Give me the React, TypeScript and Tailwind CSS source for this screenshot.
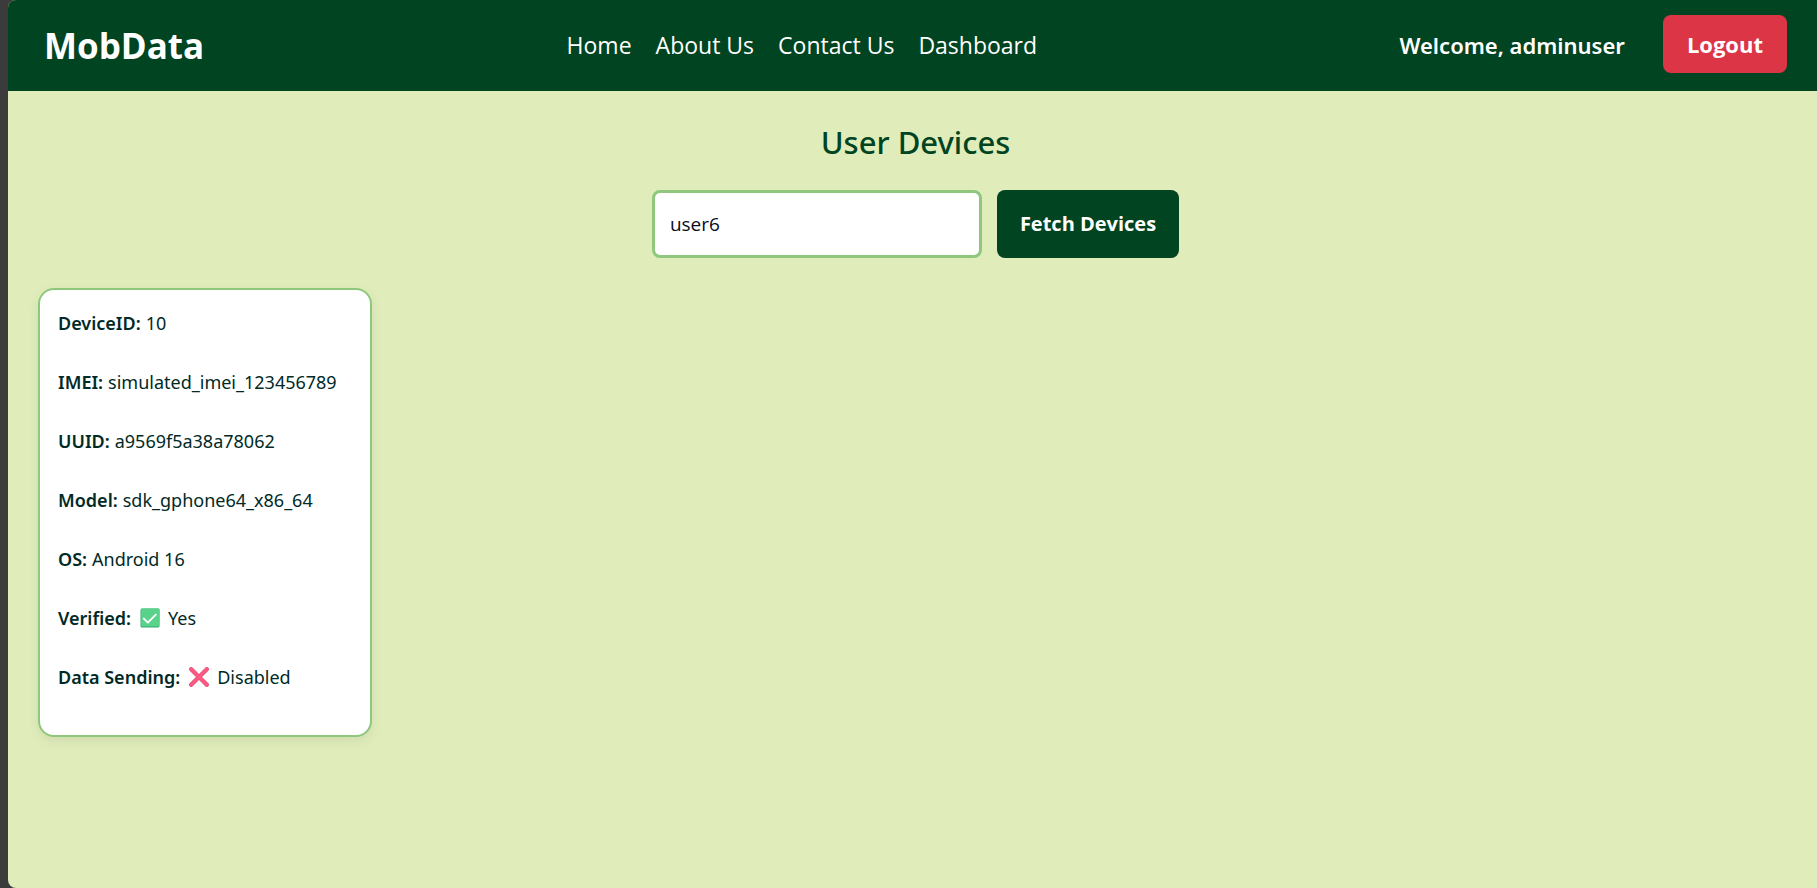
import { useState } from "react";
import type { ReactNode } from "react";

const links = ["Home", "About Us", "Contact Us", "Dashboard"];

function CheckIcon() {
  return (
    <svg viewBox="0 0 20 20" className="mx-1 size-5" aria-label="verified" role="img">
      <rect x="0.5" y="0.5" width="19" height="19" rx="1.5" fill="#35a873" />
      <rect x="1.2" y="0.5" width="18.3" height="18" rx="1.2" fill="#59d28c" />
      <path d="M3.8 10.6 7.8 14.6l8-8" fill="none" stroke="#fff" strokeWidth="1.9" strokeLinecap="round" strokeLinejoin="round" />
    </svg>
  );
}

function CrossIcon() {
  return (
    <svg viewBox="0 0 20 20" className="mx-1 size-5" aria-label="disabled" role="img">
      <path d="M2.2 2.2l15.6 15.6M17.8 2.2 2.2 17.8" fill="none" stroke="#e0446c" strokeWidth="4.2" strokeLinecap="round" />
      <path d="M2.2 2.2l15.6 15.6M17.8 2.2 2.2 17.8" fill="none" stroke="#fb5a84" strokeWidth="3.2" strokeLinecap="round" />
    </svg>
  );
}

function Row({ label, children }: { label: string; children: ReactNode }) {
  return (
    <div className="flex items-center gap-[5px] whitespace-nowrap">
      <dt className="font-semibold">{label}:</dt>
      <dd className="flex items-center gap-1">{children}</dd>
    </div>
  );
}

export default function App() {
  const [user, setUser] = useState("user6");
  return (
    <div className="min-h-screen bg-[#3b3b3b] pl-2 font-['Open_Sans','Noto_Sans',sans-serif]">
      <div className="min-h-screen overflow-hidden rounded-l-lg bg-[#e0edbb]">
        <header className="flex items-center justify-between bg-[#004421] py-[15px] pr-[30px] pl-9 text-white">
          <a href="#" className="text-[35px] leading-[61px] font-bold">MobData</a>
          <nav className="flex gap-6 text-[23px]">
            {links.map((l) => (
              <a key={l} href="#">{l}</a>
            ))}
          </nav>
          <div className="flex items-center gap-[38px]">
            <span className="font-['Noto_Sans',sans-serif] text-[22px] font-semibold">Welcome, adminuser</span>
            <button className="mb-[3px] h-[58px] rounded-lg bg-[#dc3545] px-6 text-[22px] font-bold">Logout</button>
          </div>
        </header>
        <main className="pt-[30px] pr-6 pb-[30px] pl-[30px]">
          <h1 className="text-center font-['Noto_Sans',sans-serif] text-[31px] leading-[42px] font-medium text-[#004421]">User Devices</h1>
          <form className="mt-[27px] flex justify-center gap-[15px]" onSubmit={(e) => e.preventDefault()}>
            <input
              aria-label="Username"
              value={user}
              onChange={(e) => setUser(e.target.value)}
              className="h-[68px] w-[330px] rounded-lg border-3 border-[#8fc77d] bg-white px-[15px] text-[19px] text-[#0a0a1e]"
            />
            <button className="h-[68px] rounded-lg bg-[#004421] px-[23px] text-[20px] font-bold text-white">Fetch Devices</button>
          </form>
          <dl className="mt-[30px] flex w-[334px] flex-col gap-[29px] rounded-2xl border-2 border-[#8fc77d] bg-white px-[18px] pt-[18px] pb-[43px] font-['Noto_Sans',sans-serif] text-[18px] leading-[30px] text-[#012a26] shadow-[0_4px_12px_rgba(0,0,0,0.08)]">
            <Row label="DeviceID">10</Row>
            <Row label="IMEI">simulated_imei_123456789</Row>
            <Row label="UUID">a9569f5a38a78062</Row>
            <Row label="Model">sdk_gphone64_x86_64</Row>
            <Row label="OS">Android 16</Row>
            <Row label="Verified"><CheckIcon />Yes</Row>
            <Row label="Data Sending"><CrossIcon />Disabled</Row>
          </dl>
        </main>
      </div>
    </div>
  );
}
